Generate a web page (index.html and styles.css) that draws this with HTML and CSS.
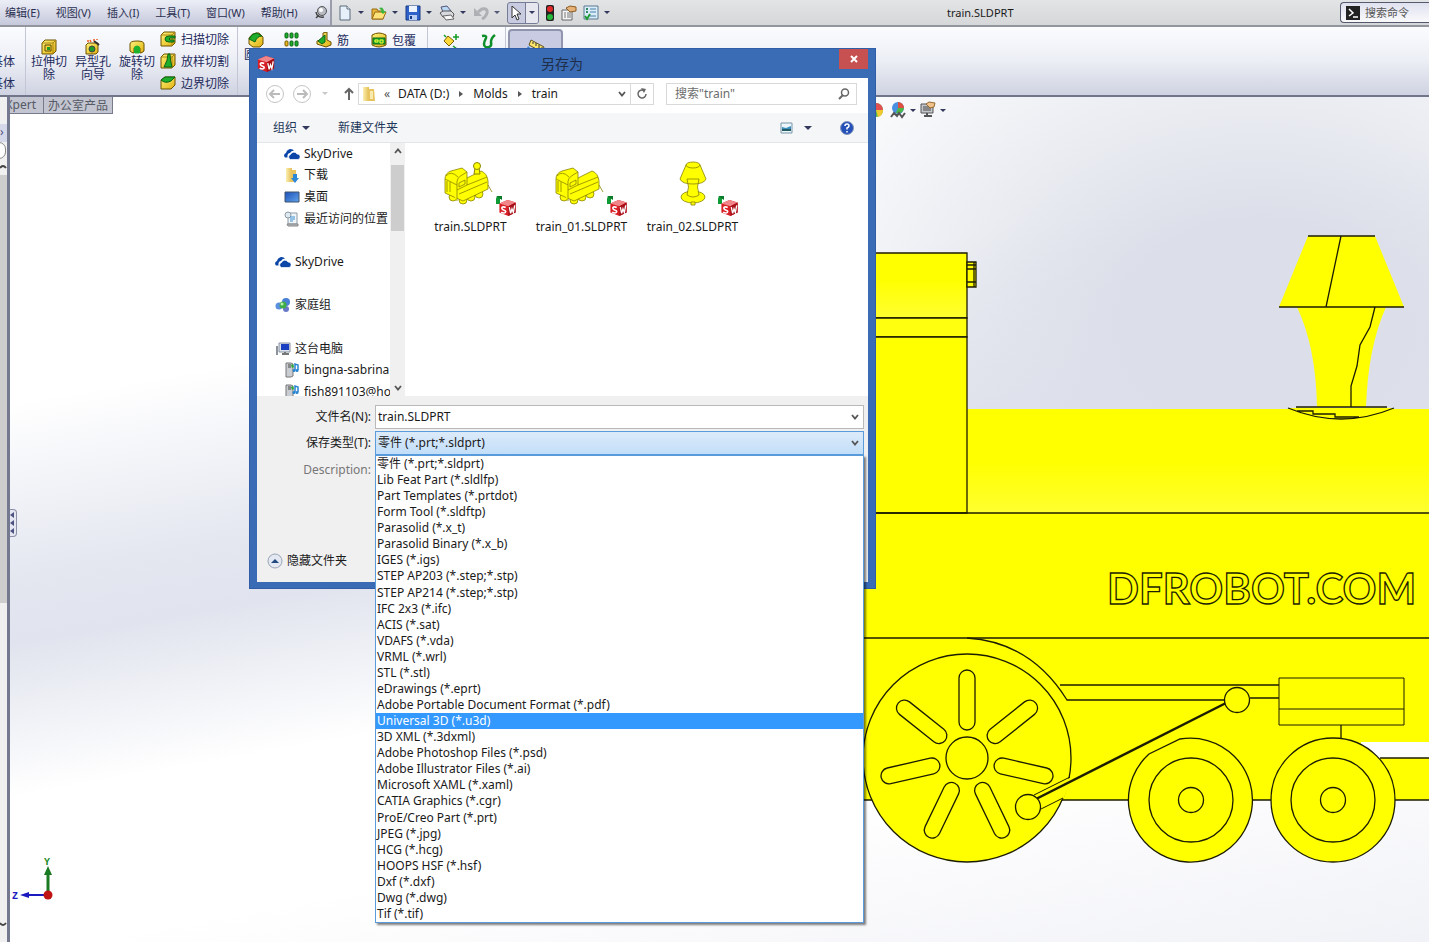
FILE: index.html
```html
<!DOCTYPE html>
<html lang="zh-CN">
<head>
<meta charset="utf-8">
<title>train.SLDPRT</title>
<link rel="stylesheet" href="styles.css">
</head>
<body>
<svg class="defs" aria-hidden="true">
  <defs>
    <linearGradient id="gold" x1="0" y1="0" x2="1" y2="1"><stop offset="0" stop-color="#fff27a"/><stop offset="1" stop-color="#e0b010"/></linearGradient>
    <linearGradient id="folderFill" x1="0" y1="0" x2="1" y2="0"><stop offset="0" stop-color="#fbeeb0"/><stop offset="1" stop-color="#e3bd50"/></linearGradient>
    <linearGradient id="blueFill" x1="0" y1="0" x2="1" y2="1"><stop offset="0" stop-color="#1c50b8"/><stop offset="1" stop-color="#5fa3ea"/></linearGradient>
    <symbol id="box" viewBox="0 0 16 16"><path d="M1 4l3-3h11v11l-3 3H1z" fill="url(#gold)" stroke="#6d5200"/><path d="M1 4h11v11M12 4l3-3" fill="none" stroke="#a88410"/></symbol>
    <symbol id="sw" viewBox="0 0 20 20"><path d="M1 5l9-4 9 3v11l-8 4-10-4z" fill="#d91f26"/><path d="M1 5l9-4 9 3-8 4z" fill="#f0868a"/><path d="M11 8l8-4v11l-8 4z" fill="#a50f18"/><path d="M8 9.500c-3-1.500-5-.5-4 1.500s4 1 4 3-3 2-5 .5" fill="none" stroke="#fff" stroke-width="1.800"/><path d="M12 9l1.500 7 1.500-5 1.500 4L18 7" fill="none" stroke="#fff" stroke-width="1.500"/></symbol>
    <symbol id="badge" viewBox="0 0 22 22"><path d="M1 9V4q0-3 4-3h2v3H5v5z" fill="#0e9a35"/><path d="M1 1h6v4z" fill="#0b7a28"/><use href="#sw" x="3" y="4" width="19" height="18"/></symbol>
    <symbol id="cloud" viewBox="0 0 16 12"><path d="M1 9.500a2.600 2.600 0 0 1 1-4.500 4.600 4.600 0 0 1 8-2.500Q7 2.500 6 5 3 5.500 3.500 9.500z" fill="#0b46a8"/><path d="M6.500 11.500a2.600 2.600 0 0 1 0-5 3.600 3.600 0 0 1 6.500-.5 2.800 2.800 0 0 1 1 5.500z" fill="#0b46a8" stroke="#fff" stroke-width=".7"/></symbol>
    <symbol id="chev" viewBox="0 0 10 8"><path d="M2 2l3 3.500L8 2" fill="none" stroke="#555" stroke-width="1.800"/></symbol>
    <symbol id="server" viewBox="0 0 16 16"><path d="M2 1h5l2 1v12l-2 1H2z" fill="#c9cdd2" stroke="#777"/><path d="M4 3h3M4 5h3" stroke="#444"/><path d="M7 3l2-1 1 3-2 1z" fill="#2faa3a"/><path d="M11 8V2l3 1v5" fill="none" stroke="#2783d0" stroke-width="1.500"/><circle cx="10" cy="8.500" r="1.500" fill="#2783d0"/><circle cx="13" cy="8.500" r="1.500" fill="#2783d0"/></symbol>
    <symbol id="loco" viewBox="0 0 50 46">
      <g fill="#ff0" stroke="#8a8400" stroke-width=".8"><circle cx="20" cy="39" r="4"/><circle cx="28" cy="36" r="4"/><circle cx="36" cy="33" r="4"/><circle cx="10" cy="36" r="4"/><path d="M2 18q0-6 6-8l11-3 5 4v6l14-7q6 2 7 10l0 8-25 12-18-8z"/><path d="M2 18l12 6v16M14 24q-1-7 5-10l5-3M3 15q5-6 12 1M24 17v7l-10 5M24 24l20-8M16 33l28-12M45 24l4 7M7 21v10M4 20v11M16 22l6-3v4l-6 3z"/></g>
    </symbol>
  </defs>
</svg>

<header class="menubar">
  <nav class="menus">
    <button>编辑(E)</button><button>视图(V)</button><button>插入(I)</button><button>工具(T)</button><button>窗口(W)</button><button>帮助(H)</button>
    <button class="pin" aria-label="固定"><svg width="14" height="14" viewBox="0 0 14 14"><circle cx="8" cy="5" r="4.500" fill="#b8bac2" stroke="#555"/><circle cx="7" cy="4" r="2" fill="#fff"/><path d="M2 6q1 6 8 5M5 9l-3 3" fill="none" stroke="#444" stroke-width="1.500"/></svg></button>
  </nav>
  <div class="quick">
    <button aria-label="新建"><svg width="16" height="16"><path d="M3 1h7l3 3v11H3z" fill="#e6f0fa" stroke="#5c6b7c"/><path d="M10 1v3h3" fill="#fff" stroke="#5c6b7c"/></svg><i class="tri"></i></button>
    <button aria-label="打开"><svg width="16" height="16"><path d="M1 4h5l1 2h5v8H1z" fill="#e9b73a" stroke="#9a6a10"/><path d="M1 14l3-7h11l-3 7z" fill="#ffe27a" stroke="#9a6a10"/><path d="M8 3q4-2 5 3h2l-3 3-3-3h2" fill="#3cb53c"/></svg><i class="tri"></i></button>
    <button aria-label="保存"><svg width="16" height="16"><path d="M1 1h14v14H1z" fill="#2f62c8" stroke="#173a86"/><path d="M4 1h8v6H4z" fill="#eef4ff"/><path d="M4 10h8v5H4z" fill="#b9cdf2"/><path d="M5 11h2v3H5z" fill="#173a86"/></svg><i class="tri"></i></button>
    <button aria-label="打印"><svg width="16" height="16"><path d="M4 7l-2-5 6-1 4 5z" fill="#b9d9f4" stroke="#557"/><path d="M1 8l3-2h8l3 3-1 3H4z" fill="#d8dae0" stroke="#555"/><path d="M4 11l8-1 3 4-8 1z" fill="#f7f7f7" stroke="#666"/></svg><i class="tri"></i></button>
    <button aria-label="撤消" disabled><svg width="16" height="16"><path d="M5 7l4-3q6-1 5 4-1 4-5 6" fill="none" stroke="#a3a5aa" stroke-width="3"/><path d="M1 3v8h8z" fill="#a3a5aa"/></svg><i class="tri"></i></button>
    <button class="picked" aria-label="选择"><svg width="16" height="16"><path d="M4 1v12l3-3 2 5 2-1-2-5h4z" fill="#fff" stroke="#333"/></svg><span class="split"><i class="tri"></i></span></button>
    <button class="light" aria-label="重建模型"><svg width="10" height="16"><rect x="1" y="0" width="8" height="16" rx="2" fill="#222"/><circle cx="5" cy="4" r="3" fill="#e02a2a"/><circle cx="5" cy="12" r="3" fill="#25b83a"/></svg></button>
    <button class="single" aria-label="文件属性"><svg width="16" height="16"><path d="M1 5h10v10H1z" fill="#f4f4f4" stroke="#666"/><path d="M3 8h2m1 0h4M3 10h2m1 0h4M3 12h2m1 0h4" stroke="#777"/><path d="M5 3l4-2 6 1v4l-6 1z" fill="#e7b277" stroke="#8a5a24"/></svg></button>
    <button aria-label="选项"><svg width="16" height="16"><path d="M1 1h14v13H1z" fill="#d9edf8" stroke="#5a7890"/><path d="M7 4h6M7 7h6M7 11h6" stroke="#4a7da8"/><path d="M3 4h2M3 7h2" stroke="#386" stroke-width="2"/><path d="M2 11l2 3 3-5" fill="none" stroke="#1f9a35" stroke-width="2"/></svg><i class="tri"></i></button>
  </div>
  <div class="doc">train.SLDPRT</div>
  <label class="cmd"><svg width="14" height="14"><path d="M0 0h14v14H0z" fill="#222"/><path d="M3 3l4 4-4 3M7 11h5" fill="none" stroke="#fff" stroke-width="1.500"/></svg><input type="text" placeholder="搜索命令" aria-label="搜索命令"></label>
</header>

<section class="ribbon">
  <div class="stub"><span>基体</span><span>基体</span></div>
  <div class="group large">
    <button><svg width="16" height="16"><use href="#box"/><path d="M4 6h6v6H4z" fill="#f7d53a" stroke="#5c4700"/><path d="M6 8h3v3H6z" fill="#1d9a28"/></svg>拉伸切除</button>
    <button><svg width="16" height="16"><path d="M1 6l2-2h10v9l-2 2H1z" fill="url(#gold)" stroke="#6d5200"/><circle cx="7" cy="10" r="3" fill="#1d9a28" stroke="#444"/><path d="M9 2l5 4" stroke="#333" stroke-width="2"/><path d="M5 1l1 2M9 0v2M12 0v1M2 2h2" stroke="#f05a20" stroke-width="1.500"/></svg>异型孔向导</button>
    <button><svg width="16" height="16"><path d="M1 5q0-3 7-3t7 3v7q-2 2-4 2V9q-3-2-6 0v5q-2 0-4-2z" fill="url(#gold)" stroke="#6d5200"/><path d="M5 14V8q3-3 6 0v6q-3 1-6 0" fill="#20b22c"/></svg>旋转切除</button>
  </div>
  <div class="group small">
    <button><svg width="16" height="16"><use href="#box"/><path d="M15 5H9q-4 0-4 3t4 3h5V9h-4q-2-1 0-2h5z" fill="#1fae2b" stroke="#0b6414"/></svg>扫描切除</button>
    <button><svg width="16" height="16"><use href="#box"/><path d="M8 1q0 6-4 13h8Q10 7 10 1z" fill="#1fae2b" stroke="#0b6414"/></svg>放样切割</button>
    <button><svg width="16" height="16"><path d="M1 5l4-3h10v8l-4 4H1z" fill="url(#gold)" stroke="#6d5200"/><path d="M1 5l4-3h10l-4 4q-6 3-10-1z" fill="#1fae2b" stroke="#0b6414"/></svg>边界切除</button>
  </div>
  <div class="group features">
    <button class="fillet"><svg width="16" height="16"><path d="M1 6q3-5 7-5h3l4 4v7l-3 3H5l-4-3z" fill="url(#gold)" stroke="#6d5200"/><path d="M1 7q3-6 8-6l5 3q-5 0-7 6z" fill="#1fae2b" stroke="#0b6414"/></svg><span>圆角</span></button>
    <button class="pattern" aria-label="线性阵列"><svg width="16" height="16"><g fill="#1fae2b" stroke="#0b6414"><rect x="1" y="1" width="3" height="5" rx="1"/><rect x="6" y="1" width="3" height="5" rx="1"/><rect x="11" y="1" width="3" height="5" rx="1"/><rect x="6" y="9" width="3" height="5" rx="1"/><rect x="11" y="9" width="3" height="5" rx="1"/></g><rect x="1" y="9" width="3" height="5" rx="1" fill="#e8b820" stroke="#7a5b00"/></svg></button>
    <button class="inline"><svg width="16" height="16"><path d="M7 1l4-1v8l4 2v3l-5 2-9-3V9l6-2z" fill="url(#gold)" stroke="#6d5200"/><path d="M2 9l7-6v7l-3 2z" fill="#1fae2b" stroke="#0b6414"/></svg>筋</button>
    <button class="inline wrapb"><svg width="16" height="16"><path d="M1 3q7-4 14 0v10q-7 4-14 0z" fill="url(#gold)" stroke="#6d5200"/><path d="M2 6h12v6H2z" fill="#1fae2b" stroke="#0b6414"/><path d="M4 8h3v2H4zM9 8h3v3H9z" fill="none" stroke="#ff3"/></svg>包覆</button>
  </div>
  <div class="group curves">
    <button aria-label="参考几何体"><svg width="18" height="16"><path d="M6 3l6 5-5 5-5-5z" fill="#ffd83a" stroke="#7a6200"/><path d="M2 2l2 2M11 13l4 3M14 1v6M11 4h6" stroke="#159a25" stroke-width="1.500"/></svg></button>
    <button aria-label="曲线"><svg width="16" height="16"><path d="M2 3q5-1 4 2-2 4-2 6 0 4 5 3 3-1 2-5 0-4 4-7" fill="none" stroke="#0f8f2a" stroke-width="2.500"/></svg></button>
  </div>
  <button class="instant" aria-label="Instant3D"><svg width="24" height="18"><path d="M7 1l13 7-2 5L5 6z" fill="#ffe66b" stroke="#5d5320"/><path d="M9 3v2m3-1v3m3-1v3m3-1v2" stroke="#333"/><path d="M4 7l-3 6 14 4z" fill="#3f86d8"/></svg></button>
</section>

<main class="work">
  <aside class="tree"><span class="tree-top">&#8250;</span><span class="tree-knob"></span><svg width="8" height="8"><path d="M0 5q3-4 6 0" fill="none" stroke="#444" stroke-width="2"/></svg><span class="tree-thumb"></span><svg class="tree-down" width="8" height="8"><path d="M0 3q3 4 6 0" fill="none" stroke="#444" stroke-width="2"/></svg></aside>
  <div class="viewport">
    <div class="tabs"><button class="first"><span>DimXpert</span></button><button>办公室产品</button></div>
    <button class="handle" aria-label="折叠"><svg width="8" height="26"><path d="M6 2v6L2 5zM6 10v6l-4-3zM6 18v6l-4-3z" fill="#4d5280"/></svg></button>
    <div class="view-tools">
      <svg width="16" height="18" viewBox="0 0 16 18"><circle cx="6" cy="9" r="7" fill="#58b848"/><path d="M6 2a7 7 0 0 1 7 7H6z" fill="#e05050"/><path d="M6 9h7a7 7 0 0 1-5 7z" fill="#f0c830"/></svg>
      <svg width="16" height="18"><circle cx="8" cy="7" r="6" fill="#4a90e0"/><path d="M8 1a6 6 0 0 1 6 6H8z" fill="#e05040"/><path d="M8 7h6a6 6 0 0 1-8 5z" fill="#4cb848"/><path d="M1 16l3-4 3 3 2-3 3 4 3-4" fill="none" stroke="#555" stroke-width="2"/></svg><i class="tri"></i>
      <svg width="16" height="18"><path d="M1 3h12v9H1z" fill="#c4c7cc" stroke="#555"/><path d="M3 5h8v5H3z" fill="#888"/><path d="M4 15h8M7 12v3" stroke="#555" stroke-width="2"/><path d="M6 3l3-2 6 1-1 4-4 1z" fill="#efc38b" stroke="#946a30"/></svg><i class="tri"></i>
    </div>
    <svg class="triad" width="50" height="50" viewBox="0 0 50 50"><path d="M38 38V14" stroke="#1a7a22" stroke-width="3"/><path d="M38 10l4 9h-8z" fill="#1a7a22"/><path d="M38 39H18" stroke="#1a1ac0" stroke-width="2"/><path d="M10 39l9-3v6z" fill="#1a1ac0"/><circle cx="38" cy="39" r="4.500" fill="#c01414"/><text x="34" y="9" fill="#1a8a22">Y</text><text x="2" y="43" fill="#1a1ac0">Z</text></svg>
    <svg class="model" viewBox="864 230 565 640" role="img" aria-label="train">
      <defs><linearGradient id="boiler" x1="0" y1="0" x2="0" y2="1"><stop offset=".5" stop-color="#ff0"/><stop offset="1" stop-color="#ffff30"/></linearGradient>
      <linearGradient id="cab" x1="0" y1="0" x2="0" y2="1"><stop offset=".4" stop-color="#ff0"/><stop offset="1" stop-color="#ffff30"/></linearGradient>
      <rect id="slot" x="959" y="670" width="16" height="60" rx="8"/></defs>
      <path d="M864 513h565v229h-68v16h68v42H864z" fill="#ff0"/>
      <g stroke="#1c1c00" stroke-width="1.300">
        <path d="M967 409h462v104H967z" fill="url(#boiler)" stroke="none"/>
        <path d="M864 253h103v65H864z" fill="url(#cab)"/><path d="M864 318h103v19H864z" fill="#ffff10"/><path d="M864 337h103v176H864z" fill="#ff0"/>
        <path d="M967 262h9v25h-9zM967 265h9M967 269h9M967 282h9M974 262v25" fill="#ff0"/>
        <path d="M1308 236h67l29 71h-125z" fill="#ff0" stroke="none"/><path d="M1297 307h89q-18 40-20 100h-49q-1-60-20-100z" fill="#ff0" stroke="none"/>
        <path d="M1288 408q53 22 106 0z" fill="#ff0" stroke="none"/>
        <path d="M1308 236h67M1279 307h125M1341 236l-15 71M1375 307l-5 20-10 18-3 21-6 20v21M1296 407h91M1288 408q53 22 106 0M1297 411h16v3h22v3h24M864 513h565M864 638h565M864 800h519M1380 758h49M1383 800h46" fill="none"/>
        <path d="M967 638q64 4 100 62h158M1060 685h219M1250 698h29M1341 725v14" fill="none"/>
        <path d="M1279 678h125v47h-125zM1279 709h125" fill="#ff0" stroke-width="1"/>
        <circle cx="967" cy="758" r="104" fill="#ff0"/>
        <g fill="#ff0"><use href="#slot"/><use href="#slot" transform="rotate(51.430 967 758)"/><use href="#slot" transform="rotate(102.860 967 758)"/><use href="#slot" transform="rotate(154.290 967 758)"/><use href="#slot" transform="rotate(205.710 967 758)"/><use href="#slot" transform="rotate(257.140 967 758)"/><use href="#slot" transform="rotate(308.570 967 758)"/><circle cx="967" cy="758" r="21"/></g>
        <path d="M1034 795l38-18-8 21-23 11z" fill="#ff0" stroke="none"/><path d="M1034 795l36-18M1041 809l22-11" stroke-width="1"/><path d="M1036 799l190-96" stroke-width="2.500"/>
        <g fill="#ff0"><circle cx="1028" cy="807" r="12.500"/><circle cx="1237" cy="700" r="12.500"/><path d="M1180 739A62 62 0 1 1 1149 754z"/><circle cx="1191" cy="800" r="42"/><circle cx="1191" cy="800" r="12.500"/><circle cx="1333" cy="800" r="62"/><circle cx="1333" cy="800" r="42"/><circle cx="1333" cy="800" r="12.500"/></g>
      </g>
      <text class="engrave" x="1107" y="604">DFROBOT.COM</text>
    </svg>
  </div>
</main>

<section class="dialog" role="dialog" aria-labelledby="dlg-title">
  <div class="titlebar"><svg width="18" height="18"><use href="#sw"/></svg><h1 id="dlg-title">另存为</h1><button class="close" aria-label="关闭"><svg width="10" height="10"><path d="M2 2l6 6M8 2L2 8" stroke="#fff" stroke-width="2"/></svg></button></div>
  <div class="pane">
    <div class="address">
      <button class="round" aria-label="后退"><svg width="20" height="20"><circle cx="10" cy="10" r="8.500" fill="#fff" stroke="#c3c5c8"/><path d="M15 10H6M9 6l-4 4 4 4" fill="none" stroke="#bbb" stroke-width="2"/></svg></button>
      <button class="round" aria-label="前进"><svg width="20" height="20"><circle cx="10" cy="10" r="8.500" fill="#fff" stroke="#c3c5c8"/><path d="M5 10h9M11 6l4 4-4 4" fill="none" stroke="#bbb" stroke-width="2"/></svg></button>
      <i class="tri pale"></i>
      <button class="up" aria-label="向上"><svg width="12" height="14"><path d="M6 13V3M2 6l4-4 4 4" fill="none" stroke="#666" stroke-width="2"/></svg></button>
      <div class="path">
        <svg width="14" height="16"><path d="M1 1h6v14H1z" fill="url(#folderFill)"/><path d="M6 3h6l1 12H6z" fill="#e7c460"/><path d="M8 5h3v8H8z" fill="#f9eab0"/></svg>
        <span class="back">«</span><a href="#d">DATA (D:)</a><i class="step"></i><a href="#m">Molds</a><i class="step"></i><a href="#t">train</a>
        <svg class="path-chev" width="10" height="8"><use href="#chev"/></svg>
        <button class="refresh" aria-label="刷新"><svg width="12" height="12"><path d="M8 2.500A4 4 0 1 0 10 6" fill="none" stroke="#666" stroke-width="1.500"/><path d="M5 0l5 1-2 4z" fill="#666"/></svg></button>
      </div>
      <label class="search"><input type="text" placeholder="搜索&quot;train&quot;" aria-label="搜索"><svg width="12" height="12"><circle cx="7" cy="4.500" r="3.500" fill="none" stroke="#666" stroke-width="1.500"/><path d="M5 7l-4 4" stroke="#666" stroke-width="2"/></svg></label>
    </div>
    <div class="tools">
      <button>组织 <i class="tri"></i></button><button>新建文件夹</button>
      <button class="views" aria-label="视图"><svg width="13" height="12"><path d="M1 1h11v10H1z" fill="#eaf5fc" stroke="#7b95a8"/><path d="M2 5l4 1 5-2v3H2z" fill="#3c8fc0"/><path d="M2 7h9v2H2z" fill="#235c60"/></svg><i class="tri"></i></button>
      <button class="help" aria-label="帮助"><svg width="14" height="14"><circle cx="7" cy="7" r="6.500" fill="#2450b8" stroke="#8899bb"/><path d="M5 5q0-2 2-2t2 2q0 1-2 2v1.500M7 10v1.500" fill="none" stroke="#fff" stroke-width="1.500"/></svg></button>
    </div>
    <div class="browse">
      <ul class="places">
        <li class="sub"><svg width="16" height="12"><use href="#cloud"/></svg>SkyDrive</li>
        <li class="sub"><svg width="16" height="16"><path d="M2 1h6v14H2z" fill="url(#folderFill)"/><path d="M7 3h5v12H7z" fill="#e7c460"/><path d="M9 7h4v4h2l-4 5-4-5h2z" fill="#2b88d8"/></svg>下载</li>
        <li class="sub"><svg width="16" height="14"><path d="M1 2h14v10H1z" fill="url(#blueFill)" stroke="#40536e"/></svg>桌面</li>
        <li class="sub"><svg width="16" height="16"><path d="M4 2h9v11H4z" fill="#eef4f8" stroke="#8d9aa5"/><circle cx="4" cy="4" r="3" fill="#dfe9f0" stroke="#8d9aa5"/><path d="M6 6h5M6 8h5M6 10h3" stroke="#3c8fd0"/><path d="M3 13h11v2H4z" fill="#b5bbc0" stroke="#888"/></svg>最近访问的位置</li>
        <li></li>
        <li><svg width="16" height="12"><use href="#cloud"/></svg>SkyDrive</li>
        <li></li>
        <li><svg width="16" height="16"><circle cx="4" cy="9" r="3.500" fill="#5b8fe0"/><circle cx="11" cy="5" r="4" fill="#4a7fd6"/><circle cx="11" cy="12" r="3" fill="#6a78c8"/><circle cx="8" cy="8" r="3.500" fill="#3fae45"/><circle cx="7" cy="7" r="1.500" fill="#b9efb5"/></svg>家庭组</li>
        <li></li>
        <li><svg width="16" height="16"><path d="M4 2h11v9H4z" fill="#dbe3ee" stroke="#8890a0"/><path d="M6 3h8v6H6z" fill="#1a3fc0"/><path d="M7 13h7M10 11v2" stroke="#777" stroke-width="2"/><path d="M1 5h2v9H1z" fill="#8c939c"/></svg>这台电脑</li>
        <li class="sub"><svg width="16" height="16"><use href="#server"/></svg>bingna-sabrina</li>
        <li class="sub"><svg width="16" height="16"><use href="#server"/></svg>fish891103@ho</li>
      </ul>
      <div class="scroll"><svg width="10" height="8" class="flip"><use href="#chev"/></svg><span></span><svg width="10" height="8"><use href="#chev"/></svg></div>
      <div class="files">
        <figure><div class="thumb"><svg width="50" height="50"><use href="#loco" y="2" width="50" height="46"/><path d="M31 15l1-6h4l1 6z" fill="#ff0" stroke="#8a8400"/><circle cx="34" cy="7" r="3.500" fill="#ff0" stroke="#8a8400"/></svg><svg class="badge" width="22" height="22"><use href="#badge"/></svg></div><figcaption>train.SLDPRT</figcaption></figure>
        <figure><div class="thumb"><svg width="50" height="50"><use href="#loco" y="2" width="50" height="46"/></svg><svg class="badge" width="22" height="22"><use href="#badge"/></svg></div><figcaption>train_01.SLDPRT</figcaption></figure>
        <figure><div class="thumb"><svg width="50" height="50"><g fill="#ff0" stroke="#8a8400" stroke-width=".8"><ellipse cx="28" cy="38" rx="12" ry="6"/><path d="M26 43h4v3h-4z"/><path d="M22 20q3 8 0 16 6 4 12 0-3-8 0-16zM21 6L15 20q2 5 13 5t13-5L35 6z"/><ellipse cx="28" cy="6" rx="7" ry="3"/></g></svg><svg class="badge" width="22" height="22"><use href="#badge"/></svg></div><figcaption>train_02.SLDPRT</figcaption></figure>
      </div>
    </div>
    <div class="form">
      <label for="fname">文件名(N):</label>
      <div class="field"><input id="fname" type="text" value="train.SLDPRT"><svg width="10" height="8"><use href="#chev"/></svg></div>
      <label for="ftype">保存类型(T):</label>
      <div class="field type"><select id="ftype"><option>零件 (*.prt;*.sldprt)</option></select><svg width="10" height="8"><use href="#chev"/></svg>
        <ul class="options" role="listbox" aria-label="保存类型">
          <li role="option">零件 (*.prt;*.sldprt)</li><li role="option">Lib Feat Part (*.sldlfp)</li><li role="option">Part Templates (*.prtdot)</li><li role="option">Form Tool (*.sldftp)</li><li role="option">Parasolid (*.x_t)</li><li role="option">Parasolid Binary (*.x_b)</li><li role="option">IGES (*.igs)</li><li role="option">STEP AP203 (*.step;*.stp)</li><li role="option">STEP AP214 (*.step;*.stp)</li><li role="option">IFC 2x3 (*.ifc)</li><li role="option">ACIS (*.sat)</li><li role="option">VDAFS (*.vda)</li><li role="option">VRML (*.wrl)</li><li role="option">STL (*.stl)</li><li role="option">eDrawings (*.eprt)</li><li role="option">Adobe Portable Document Format (*.pdf)</li><li role="option" class="active" aria-selected="true">Universal 3D (*.u3d)</li><li role="option">3D XML (*.3dxml)</li><li role="option">Adobe Photoshop Files (*.psd)</li><li role="option">Adobe Illustrator Files (*.ai)</li><li role="option">Microsoft XAML (*.xaml)</li><li role="option">CATIA Graphics (*.cgr)</li><li role="option">ProE/Creo Part (*.prt)</li><li role="option">JPEG (*.jpg)</li><li role="option">HCG (*.hcg)</li><li role="option">HOOPS HSF (*.hsf)</li><li role="option">Dxf (*.dxf)</li><li role="option">Dwg (*.dwg)</li><li role="option">Tif (*.tif)</li>
        </ul>
      </div>
      <span class="desc">Description:</span>
    </div>
    <button class="hide"><svg width="16" height="16"><circle cx="8" cy="8" r="7" fill="#e3e8f2" stroke="#9aa3b5"/><path d="M4 10l4-4 4 4z" fill="#234a80"/></svg>隐藏文件夹</button>
  </div>
</section>
</body>
</html>
```
FILE: styles.css
```css
* { box-sizing: border-box; }
html, body { height: 100%; }
body {
  margin: 0;
  display: flex;
  flex-direction: column;
  overflow: hidden;
  position: relative;
  font: 12px/16px "Noto Sans", "Noto Sans CJK SC", sans-serif;
  color: #1a1a1a;
}
button, input, select { font: inherit; color: inherit; border: 0; background: none; padding: 0; margin: 0; outline: 0; }
ul { list-style: none; margin: 0; padding: 0; }
svg { flex: none; display: block; }
.defs { position: absolute; width: 0; height: 0; }
.tri { flex: none; width: 0; height: 0; border: 3px solid transparent; border-top-color: #33395c; border-bottom: 0; }

/* Menu bar */
.menubar { flex: none; height: 27px; display: flex; align-items: stretch; background: linear-gradient(#e2e4e6, #d5d7d9); border-bottom: 2px solid #94969e; }
.menus { width: 332px; flex: none; display: flex; align-items: center; gap: 16px; padding-left: 5px; background: linear-gradient(#eceef7, #c6c9db); border-right: 2px solid #9b9daa; color: #2a2f52; font-size: 11px; }
.menus button { flex: none; white-space: nowrap; }
.quick { display: flex; align-items: center; gap: 6px; padding-left: 5px; }
.quick button { display: flex; align-items: center; gap: 5px; width: 28px; height: 22px; flex: none; }
.quick button:disabled { opacity: .8; }
.quick .picked { width: 32px; background: #c9cce0; border: 1px solid #777c96; border-radius: 3px; gap: 1px; overflow: hidden; }
.split { align-self: stretch; display: flex; align-items: center; padding: 0 3px; background: #e6e7ef; border-left: 1px solid #777c96; }
.quick .single { width: 16px; justify-content: center; }
.quick .light { width: 10px; }
.doc { flex: 1; display: flex; align-items: center; padding-left: 336px; font-size: 11px; }
.cmd { width: 89px; flex: none; margin: 2px 0; display: flex; align-items: center; gap: 5px; padding-left: 5px; background: linear-gradient(#dfe1ef, #fafafc); border: 1px solid #555a6e; border-right: 0; border-radius: 4px 0 0 4px; }
.cmd input { width: 60px; font-size: 11px; }
.cmd input::placeholder { color: #555; opacity: 1; }

/* Ribbon */
.ribbon { flex: none; height: 70px; display: flex; align-items: stretch; overflow: hidden; background: linear-gradient(#fbfcff, #eceef5 50%, #cfd2e1); border-bottom: 2px solid #70758a; color: #232a5c; font-size: 12px; line-height: 13px; }
.ribbon > * { flex: none; }
.stub { width: 26px; display: flex; flex-direction: column; align-items: flex-end; gap: 9px; padding: 28px 10px 0 0; border-right: 1px solid #c3c6d4; }
.stub span { white-space: nowrap; }
.large { display: flex; align-items: flex-start; gap: 8px; padding: 12px 0 0 5px; width: 131px; }
.large button { width: 36px; display: flex; flex-direction: column; align-items: center; line-height: 13px; }
.small { width: 81px; display: flex; flex-direction: column; gap: 6px; padding: 4px 0 0 3px; border-right: 1px solid #c3c6d4; }
.small button { display: flex; align-items: center; gap: 5px; height: 16px; white-space: nowrap; }
.features { width: 190px; display: flex; align-items: flex-start; padding: 5px 0 0 6px; border-right: 1px solid #c3c6d4; }
.features button { flex: none; display: flex; }
.fillet { flex-direction: column; width: 40px; align-items: flex-start; }
.fillet svg { margin-left: 4px; }
.pattern { width: 32px; }
.inline { align-items: center; gap: 5px; width: 55px; }
.curves { width: 78px; display: flex; gap: 20px; align-items: flex-start; padding: 6px 0 0 14px; border-right: 1px solid #c3c6d4; }
.instant { width: 55px; margin: 2px 2px 4px; background: #c9cbe2; border: 2px solid #9194ad; border-radius: 4px; display: flex; justify-content: center; padding-top: 8px; }

/* Work area */
.work { flex: 1; display: flex; min-height: 0; }
.tree { width: 10px; flex: none; background: #f0f0f0; border-right: 3px solid #757990; display: flex; flex-direction: column; padding-top: 27px; overflow: hidden; }
.tree-top { height: 18px; color: #4d5280; background: #d5d8e8; }
.tree-knob { height: 17px; margin-left: -8px; width: 14px; flex: none; border: 1px solid #888; border-radius: 8px; background: #fff; }
.tree > svg { margin: 4px 0; }
.tree-thumb { height: 428px; flex: none; background: #cdcdcd; }
.tree .tree-down { margin-top: auto; margin-bottom: 14px; }
.viewport { flex: 1; position: relative; display: flex; justify-content: flex-end; align-items: flex-start; overflow: hidden; background: radial-gradient(ellipse 38% 46% at 88% 26%, #dcdfe9 25%, rgba(222, 225, 235, 0)), linear-gradient(170deg, #fff 28%, #e4e7f0 44%, #e1e4ee 50%, #fff 64%, #fff 78%, #f1f2f7); }
.tabs { position: absolute; left: -10px; top: 0; display: flex; }
.tabs button { height: 17px; padding: 0 4px; line-height: 15px; font-size: 12px; color: #555a66; background: #c3c5d0; border: 1px solid #777b8c; border-top: 0; white-space: nowrap; }
.tabs .first { width: 43px; display: flex; justify-content: flex-end; overflow: hidden; border-right: 0; padding-right: 7px; }
.handle { position: absolute; left: -2px; top: 412px; background: #e4e6f1; border: 1px solid #8d91a8; border-left: 0; border-radius: 0 4px 4px 0; }
.view-tools { position: absolute; left: 860px; top: 4px; display: flex; align-items: center; gap: 4px; }
.triad { position: absolute; left: 0; bottom: 36px; font: bold 10px "Liberation Mono", monospace; }
.model { width: 565px; height: 640px; margin-top: 133px; }
.engrave { font: 700 42px Lato, sans-serif; fill: #ff0; stroke: #1c1c00; stroke-width: 1.300px; }

/* Save dialog */
.dialog { position: absolute; left: 249px; top: 48px; width: 627px; background: #3a6bb5; border: 1px solid #2f5ea6; padding: 0 7px 6px; }
.titlebar { height: 29px; display: flex; align-items: center; }
.titlebar h1 { flex: 1; margin: 0; padding-left: 10px; text-align: center; font-size: 14px; font-weight: 400; color: #1e2d48; }
.close { align-self: flex-start; width: 29px; height: 20px; background: #c75050; display: flex; justify-content: center; align-items: center; }
.pane { background: #f0f0f0; height: 504px; display: flex; flex-direction: column; }
.address { flex: none; height: 35px; background: #fff; display: flex; align-items: center; padding: 0 11px 4px 8px; }
.round { margin-right: 7px; }
.pale { margin: 0 15px 0 3px; border-top-color: #c8c8c8; }
.up { margin-right: 3px; }
.path { flex: 1; height: 22px; display: flex; align-items: center; border: 1px solid #d9d9d9; padding-left: 3px; }
.path a { color: inherit; text-decoration: none; white-space: nowrap; }
.back { margin: 0 8px; color: #555; }
.step { width: 0; height: 0; border: 3px solid transparent; border-left: 4px solid #555; border-right: 0; margin: 0 10px; }
.path-chev { margin-left: auto; margin-right: 3px; }
.refresh { width: 23px; align-self: stretch; border-left: 1px solid #d9d9d9; display: flex; align-items: center; justify-content: center; }
.search { width: 191px; height: 22px; margin-left: 12px; border: 1px solid #d9d9d9; display: flex; align-items: center; padding: 0 6px 0 8px; }
.search input { flex: 1; min-width: 0; }
.search input::placeholder { color: #6d6d6d; opacity: 1; }
.tools { flex: none; height: 30px; background: #f5f6f7; border-bottom: 1px solid #e3e5e8; display: flex; align-items: center; gap: 28px; padding: 0 14px 0 16px; color: #1e395b; }
.tools button { display: flex; align-items: center; gap: 5px; }
.tools .tri { border-width: 4px 4px 0; }
.tools .views { margin-left: auto; gap: 11px; }
.browse { flex: none; height: 253px; display: flex; background: #fff; overflow: hidden; }
.places { width: 133px; height: 260px; flex: none; display: grid; grid-template-rows: repeat(12, 1fr); overflow: hidden; }
.places li { display: flex; align-items: center; gap: 4px; padding-left: 18px; white-space: nowrap; min-height: 0; }
.places .sub { padding-left: 27px; }
.scroll { width: 15px; flex: none; background: #f0f0f0; display: flex; flex-direction: column; align-items: center; justify-content: space-between; padding: 4px 0; }
.scroll span { width: 13px; height: 66px; margin: 10px 0 auto; background: #cdcdcd; }
.flip { transform: rotate(180deg); }
.files { flex: 1; display: grid; grid-template-columns: repeat(auto-fill, 111px); align-content: start; padding: 16px 0 0 10px; }
.files figure { margin: 0; text-align: center; }
.thumb { position: relative; height: 60px; display: flex; justify-content: center; padding-right: 6px; }
.badge { position: absolute; left: 80px; top: 36px; }
.form { display: grid; grid-template-columns: 114px 1fr; column-gap: 4px; row-gap: 2px; padding: 9px 4px 0 0; align-items: center; }
.form label { text-align: right; }
.field { position: relative; height: 24px; display: flex; align-items: center; background: #fff; border: 1px solid #b9b9b9; padding: 0 3px 0 2px; }
.field input, .field select { flex: 1; min-width: 0; appearance: none; }
.type { background: linear-gradient(#dcebfa, #c2def9); border-color: #5a9bdb; }
.options { position: absolute; left: -1px; right: -1px; top: 23px; height: 468px; display: grid; grid-template-rows: repeat(29, 1fr); background: #fff; border: 1px solid #5a9bdb; box-shadow: 2px 2px 2px rgba(0, 0, 0, .5); z-index: 2; }
.options li { padding-left: 1px; white-space: nowrap; min-height: 0; }
.options .active { background: #39f; color: #fff; }
.desc { text-align: right; color: #777; padding-top: 5px; }
.hide { margin: auto auto 13px 10px; display: flex; align-items: center; gap: 4px; }
```
